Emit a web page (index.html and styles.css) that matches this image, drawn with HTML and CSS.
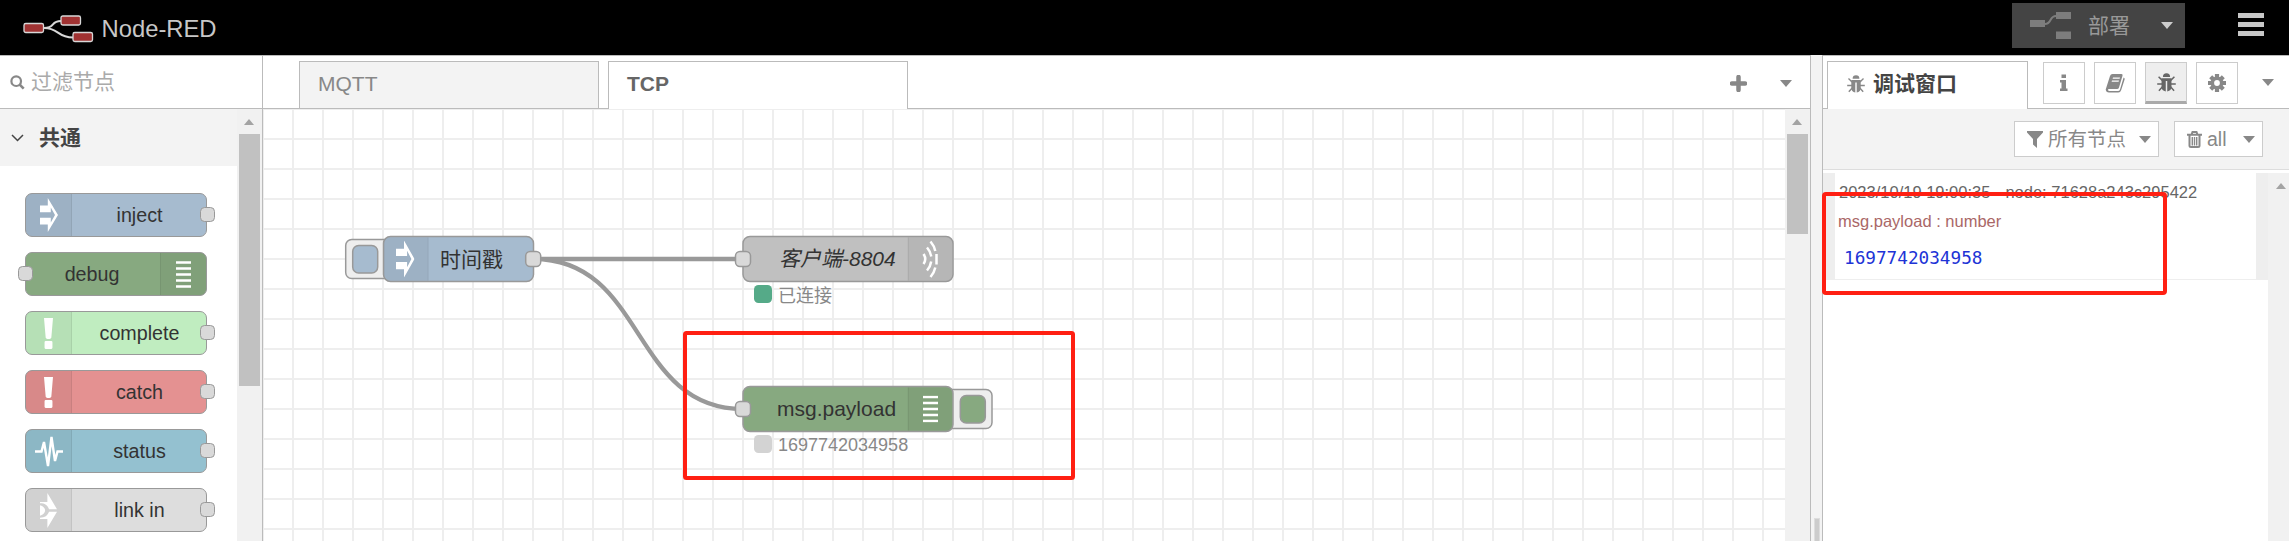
FILE: index.html
```html
<!DOCTYPE html>
<html lang="zh-CN">
<head>
<meta charset="utf-8">
<title>Node-RED</title>
<link rel="stylesheet" href="styles.css">
</head>
<body>
<svg class="defs" width="0" height="0">
  <defs>
    <pattern id="grid" width="30" height="30" patternUnits="userSpaceOnUse" x="29" y="-1"><path d="M1 0V30M0 1H30" stroke="#eee" stroke-width="2" fill="none"/></pattern>
    <symbol id="i-inject" viewBox="8 5 30 50" preserveAspectRatio="none"><path fill="#fff" fill-rule="evenodd" d="M8 16h13V5l17 25-17 25V44H8V34h18v7l7-11-7-11v7H8z"/></symbol>
    <symbol id="i-alert" viewBox="12 3 16 55" preserveAspectRatio="none"><path fill="#fff" d="M12 3h16l-3 35c-1 3-9 3-10 0zM13 46q0-2 2-2h10q2 0 2 2v10q0 2-2 2H15q-2 0-2-2z"/></symbol>
    <symbol id="i-link" viewBox="7 3 30 54" preserveAspectRatio="none"><path fill="#fff" d="M7 17h13V3l17 25H23c-3-6-7-9-16-9zM7 43h13v14l17-25H23c-3 6-7 9-16 9zM7 22c12 3 12 13 0 16z"/></symbol>
    <symbol id="i-debug" viewBox="0 0 15 27"><path stroke="#fff" stroke-width="2.400" d="M0 1.500h15M0 7.500h15M0 13.500h15M0 19.500h15M0 25.500h15"/></symbol>
    <symbol id="i-bug" viewBox="0 0 18 18"><path fill="currentColor" d="M5.600 3.700a3.400 3.400 0 0 1 6.800 0zM4.300 5h9.400v8.200q0 3.300-4 4.300V7.500H8.300v10q-4-1-4-4.300z"/><path fill="none" stroke="currentColor" stroke-width="1.400" d="M5 7 1.500 3.500M13 7l3.500-3.500M5 10.500H.2M13 10.500h4.800M5.200 13l-3.400 3.800M12.800 13l3.400 3.800"/></symbol>
  </defs>
</svg>

<header class="header">
  <svg class="logo" width="72" height="30" viewBox="0 0 72 30">
    <path d="M21 14C33 14 27 7 38 7M21 14C36 14 34 23.500 50 23.500" fill="none" stroke="#d8d8d8" stroke-width="2"/>
    <g fill="#a03232" stroke="#d8d8d8" stroke-width="1.300"><rect x="1" y="9.500" width="19.500" height="9" rx="1.800"/><rect x="38" y="2" width="19.500" height="9" rx="1.800"/><rect x="50" y="18.500" width="19.500" height="9" rx="1.800"/></g>
  </svg>
  <span class="brand">Node-RED</span>
  <div class="deploy">
    <svg width="42" height="28" viewBox="0 0 42 28"><path d="M0 8h15v7H0zM26 0h15v7H26zM26 19.500h15v7.500H26z" fill="#7d7d7d"/><path d="M15 12C22 12 19 4 26 4" fill="none" stroke="#7d7d7d" stroke-width="2"/></svg>
    <span class="deploy-label">部署</span><i class="caret light"></i>
  </div>
  <div class="menu"><i></i><i></i><i></i></div>
</header>

<main class="main">
  <aside class="palette">
    <div class="search">
      <svg width="15" height="15" viewBox="0 0 15 15" fill="none" stroke="#888"><circle cx="6.200" cy="6.200" r="4.800" stroke-width="2.200"/><path d="m9.700 9.700 4 4" stroke-width="2.600"/></svg>
      <span>过滤节点</span>
    </div>
    <div class="palette-body">
      <div class="palette-list">
        <div class="category"><svg width="13" height="8" viewBox="0 0 13 8"><path d="m1 1 5.500 5.500L12 1" fill="none" stroke="#444" stroke-width="1.500"/></svg><b>共通</b></div>
        <div class="nodes">
          <div class="node inject"><span class="ico"><svg width="18" height="34"><use href="#i-inject"/></svg></span><span class="name">inject</span><i class="port out"></i></div>
          <div class="node debug"><i class="port in"></i><span class="name">debug</span><span class="ico end"><svg width="15" height="27"><use href="#i-debug"/></svg></span></div>
          <div class="node complete"><span class="ico"><svg width="9" height="31"><use href="#i-alert"/></svg></span><span class="name">complete</span><i class="port out"></i></div>
          <div class="node catch"><span class="ico"><svg width="9" height="31"><use href="#i-alert"/></svg></span><span class="name">catch</span><i class="port out"></i></div>
          <div class="node status"><span class="ico"><svg width="30" height="42" viewBox="0 0 30 42"><path d="M1 21.500h6.500L10 12l4 24L17.500 7l3.500 24 2.500-9.500H29" fill="none" stroke="#fff" stroke-width="2.400"/></svg></span><span class="name">status</span><i class="port out"></i></div>
          <div class="node link"><span class="ico"><svg width="17" height="35"><use href="#i-link"/></svg></span><span class="name">link in</span><i class="port out"></i></div>
        </div>
      </div>
      <div class="scroll"><i class="up"></i><i class="thumb tall"></i></div>
    </div>
  </aside>

  <section class="workspace">
    <div class="tabs">
      <div class="tab">MQTT</div><div class="tab active">TCP</div>
      <div class="tab-tools"><svg width="17" height="17" viewBox="0 0 17 17"><path d="M8.500 2v13M2 8.500h13" stroke="#888" stroke-width="4.500" stroke-linecap="round"/></svg><i class="caret"></i></div>
    </div>
    <div class="chart-row">
      <svg class="chart" width="1522" height="432" viewBox="0 0 1522 432">
        <rect width="1522" height="432" fill="url(#grid)"/>
        <g transform="translate(-263 -109)">
          <path d="M533.500 259H743M533.500 259C646 259 631 409 743 409" fill="none" stroke="#999" stroke-width="4.300"/>
          <g stroke="#999" stroke-width="1.500">
            <rect x="345.700" y="239.500" width="48" height="39" rx="6" fill="#eee"/>
            <rect x="352.700" y="245.500" width="25" height="27.500" rx="6" fill="#a6bbcf"/>
            <rect x="383.500" y="236.500" width="150" height="45" rx="7" fill="#a6bbcf"/>
            <rect x="743" y="236.500" width="210" height="45" rx="7" fill="#c0c0c0"/>
            <rect x="942" y="389.500" width="50" height="39" rx="6" fill="#eee"/>
            <rect x="960.300" y="395.500" width="25" height="27.500" rx="6" fill="#87a980"/>
            <rect x="743" y="386.500" width="210" height="45" rx="7" fill="#87a980"/>
          </g>
          <g fill="#000" fill-opacity=".05"><path d="M428 237.500h-38q-6 0-6 6v31q0 6 6 6h38zM908 237.500h38q6 0 6 6v31q0 6-6 6h-38zM908 387.500h38q6 0 6 6v31q0 6-6 6h-38z"/><path d="M427.500 237.500h1.500v43h-1.500zM907.500 237.500h1.500v43h-1.500zM907.500 387.500h1.500v43h-1.500z"/></g>
          <g fill="#d9d9d9" stroke="#999" stroke-width="1.500"><rect x="525.700" y="251.500" width="15" height="15" rx="4.500"/><rect x="735.500" y="251.500" width="15" height="15" rx="4.500"/><rect x="735.500" y="401.500" width="15" height="15" rx="4.500"/></g>
          <use href="#i-inject" x="396" y="240.500" width="18.500" height="37"/>
          <path fill="none" stroke="#fff" stroke-width="2.500" d="M923.500 254q3.500 5 0 10M927 247.500q3.500 4 4.200 9M931.200 261.500q-.7 5-4.200 9M930.500 241.500q3.800 4.500 4.800 9.500M936.500 254v10.500M935.300 267.500q-1 5-4.800 9.500"/>
          <use href="#i-debug" x="923" y="395.500" width="15" height="27"/>
          <g class="label"><text x="440" y="266.500">时间戳</text><text x="779" y="266" font-style="italic">客户端-8804</text><text x="777" y="416">msg.payload</text></g>
          <rect x="754" y="285" width="18" height="18" rx="4.500" fill="#5a8"/>
          <rect x="754" y="435" width="18" height="18" rx="4.500" fill="#d3d3d3"/>
          <g class="state"><text x="778" y="301.500">已连接</text><text x="778" y="451">1697742034958</text></g>
          <rect x="685" y="333" width="388" height="145" rx="1.500" fill="none" stroke="#ff1f12" stroke-width="4"/>
        </g>
      </svg>
      <div class="scroll"><i class="up"></i><i class="thumb short"></i></div>
    </div>
  </section>

  <div class="splitter"><i></i></div>

  <aside class="sidebar">
    <div class="side-tabs">
      <div class="side-tab"><svg width="18" height="18"><use href="#i-bug"/></svg><b>调试窗口</b></div>
      <div class="side-btn first"><svg width="18" height="18" viewBox="0 0 18 18"><path fill="currentColor" d="M6.500.5h4.500V4H6.500zM5 6h6v8.500h1.500V17H5v-2.500h1.500v-6H5z"/></svg></div>
      <div class="side-btn"><svg width="21" height="20" viewBox="0 0 21 20"><path fill="currentColor" fill-rule="evenodd" d="M7.500 1h9q1.500 0 1 1.800L14 14.500q-.5 1.500-2 1.500H4q-1.200 0-1 1t1.500 1H13q1.500 0 2-1.500L18.600 4.500q1.400.5 1 2L16.200 17q-.8 2.500-3 2.500H4q-3 0-3.300-3L5 3q.6-2 2.500-2zM8 4.500l-.4 1.200h7l.4-1.200zM7 7.500l-.4 1.200h7l.4-1.200z"/></svg></div>
      <div class="side-btn selected"><svg width="19" height="19"><use href="#i-bug"/></svg></div>
      <div class="side-btn"><svg width="18" height="18" viewBox="-9 -9 18 18"><g stroke="currentColor" stroke-width="4.200"><path d="M0-9V9M-9 0H9M-6.300-6.300 6.300 6.300M-6.300 6.300 6.300-6.300"/></g><circle r="6.500" fill="currentColor"/><circle r="2.900" fill="#fff"/></svg></div>
      <i class="caret"></i>
    </div>
    <div class="toolbar">
      <div class="tool filter"><svg width="16" height="17" viewBox="0 0 16 17"><path fill="#888" d="M0 0h16v1.500L10 8v9l-4-3.500V8L0 1.500z"/></svg><span>所有节点</span><i class="caret"></i></div>
      <div class="tool trash"><svg width="15" height="17" viewBox="0 0 15 17"><path fill="none" stroke="#888" stroke-width="2" d="M0 3.800h15M4.500 3.500l1-2.500h4l1 2.500M2.500 4v10.500q0 1.500 1.500 1.500h7q1.500 0 1.500-1.500V4"/><path stroke="#888" stroke-width="1.400" d="M5.300 6V14.500M7.500 6V14.500M9.700 6V14.500"/></svg><span>all</span><i class="caret"></i></div>
    </div>
    <div class="debug-body">
      <div class="messages">
        <div class="message">
          <div class="meta"><span>2023/10/19 19:00:35</span><span>node: 71628a243c295422</span></div>
          <div class="topic">msg.payload : number</div>
          <div class="value">1697742034958</div>
        </div>
      </div>
      <div class="scroll side-scroll"><i class="up"></i></div>
    </div>
    <div class="highlight"></div>
  </aside>
</main>
</body>
</html>
```
FILE: styles.css
```css
* { box-sizing: border-box; }
body { margin: 0; width: 2289px; height: 541px; overflow: hidden; display: flex; flex-direction: column; background: #fff; color: #888; font: 21px/30px "Liberation Sans", Arial, "Noto Sans CJK SC", sans-serif; }
svg { display: block; flex: none; }
.defs { position: absolute; }

.header { height: 55px; flex: none; background: #000; display: flex; align-items: flex-start; padding-left: 22.500px; }
.logo { margin-top: 13.500px; }
.brand { margin: 13px 0 0 7px; color: #c7c7c7; font-size: 23.800px; line-height: 32px; }
.deploy { width: 173px; height: 45px; margin: 3px 53px 0 auto; padding: 0 12px 0 18px; background: #444; color: #999; display: flex; align-items: center; }
.deploy-label { margin: 0 auto 0 16px; }
.menu { width: 26px; margin: 13px 25px 0 0; display: flex; flex-direction: column; gap: 4.500px; }
.menu i { height: 4.500px; background: #c7c7c7; }

.caret { flex: none; border: 6.500px solid transparent; border-top: 7px solid #888; border-bottom: 0; }
.caret.light { border-top-color: #ccc; }

.main { height: 486px; display: flex; }
.palette { width: 263px; border-right: 1px solid #bbb; border-top: 1px solid #bbb; display: flex; flex-direction: column; }
.search { height: 53px; flex: none; border-bottom: 1px solid #bbb; display: flex; align-items: center; gap: 6px; padding-left: 10px; color: #aaa; }
.palette-body { flex: 1; min-height: 0; display: flex; overflow: hidden; }
.palette-list { width: 237px; }
.category { height: 57px; background: #f3f3f3; color: #444; display: flex; align-items: center; gap: 15px; padding-left: 11px; }
.nodes { display: flex; flex-direction: column; gap: 15px; padding: 27px 0 0 25px; }
.node { position: relative; width: 182px; height: 44px; flex: none; border: 1.500px solid #999; border-radius: 7px; display: flex; color: #333; }
.ico { width: 46px; background: rgba(0,0,0,.05); border-right: 1px solid rgba(0,0,0,.07); border-radius: 5px 0 0 5px; display: flex; align-items: center; justify-content: center; }
.ico.end { border-right: 0; border-left: 1px solid rgba(0,0,0,.07); border-radius: 0 5px 5px 0; }
.name { flex: 1; text-align: center; line-height: 42px; font-size: 19.700px; padding-left: 1px; }
.debug .name { padding: 0 2px 0 0; }
.port { position: absolute; top: 13px; width: 15px; height: 15px; border: 1.500px solid #999; border-radius: 4.500px; background: #d9d9d9; }
.out { right: -9px; }
.in { left: -8px; }
.inject { background: #a6bbcf; }
.debug { background: #87a980; }
.complete { background: #c0edc0; }
.catch { background: #e49191; }
.status { background: #94c1d0; }
.link { background: #ddd; }

.scroll { width: 25px; background: #f1f1f1; display: flex; flex-direction: column; align-items: center; padding: 10px 1px 0 0; }
.up { border: 5.500px solid transparent; border-bottom: 6px solid #a3a3a3; border-top: 0; }
.thumb { width: 21px; margin-top: 9px; background: #c1c1c1; }
.tall { height: 252px; }
.short { height: 100px; }

.workspace { width: 1548px; border-top: 1px solid #bbb; border-right: 1px solid #bbb; display: flex; flex-direction: column; }
.tabs { height: 53px; flex: none; border-bottom: 1px solid #bbb; padding: 5px 18px 0 36px; display: flex; gap: 9px; }
.tab { width: 300px; height: 47px; border: 1px solid #bbb; border-bottom: 0; background: #f3f3f3; padding: 7px 18px; }
.tab.active { height: 48px; background: #fff; color: #666; font-weight: bold; }
.tab-tools { margin-left: auto; height: 44px; display: flex; align-items: center; gap: 33px; }
.chart-row { height: 432px; display: flex; }
.label { font-size: 21px; fill: #333; }
.state { font-size: 18px; fill: #888; }

.splitter { width: 11px; background: #f3f3f3; display: flex; align-items: flex-end; padding-left: 3px; }
.splitter i { width: 6px; height: 23px; background: #ccc; border: 1px solid #ddd; border-bottom: 0; }

.sidebar { position: relative; width: 467px; border-left: 1px solid #bbb; border-top: 1px solid #bbb; }
.side-tabs { height: 53px; border-bottom: 1px solid #bbb; padding: 5px 15px 0 4px; display: flex; align-items: flex-start; gap: 9px; }
.side-tab { width: 201px; height: 48px; border: 1px solid #bbb; border-bottom: 0; background: #fff; padding: 0 0 3px 19px; display: flex; align-items: center; gap: 8px; }
.side-tab b { color: #444; }
.side-btn { width: 42px; height: 42px; margin-top: 1px; border: 1px solid #ccc; display: flex; align-items: center; justify-content: center; }
.side-btn.first { margin-left: 6px; }
.side-btn.selected { background: #eee; border-bottom: 3px solid #aaa; color: #666; }
.side-tabs > .caret { margin: 18px 0 0 auto; }
.toolbar { height: 61px; background: #f3f3f3; border-bottom: 1px solid #ddd; display: flex; justify-content: flex-end; gap: 15px; padding: 12px 26px 0 0; }
.tool { height: 36px; background: #fff; border: 1px solid #ccc; display: flex; align-items: center; padding: 0 7px 0 12px; }
.filter { width: 145px; }
.trash { width: 89px; }
.tool span { margin: 0 auto 0 5px; font-size: 19.500px; }
.debug-body { height: 371px; padding-top: 3px; display: flex; }
.messages { width: 445px; }
.message { height: 107px; border: 0 solid #eee; border-width: 0 12px 1px; padding: 8px 0 0 3px; font-size: 16.500px; }
.meta { display: flex; gap: 15px; padding-left: 1px; line-height: 23px; color: #666; white-space: nowrap; }
.topic { line-height: 24px; margin-top: 5px; color: #aa6767; }
.value { margin: 13px 0 0 6px; color: #2033d6; font: 17.700px/24px "DejaVu Sans Mono", monospace; }
.side-scroll { width: 21px; padding-right: 0; align-items: flex-end; padding-right: 3px; }
.highlight { position: absolute; left: -1px; top: 136px; width: 345px; height: 103px; border: 4px solid #ff1f12; border-radius: 4px; }
```
